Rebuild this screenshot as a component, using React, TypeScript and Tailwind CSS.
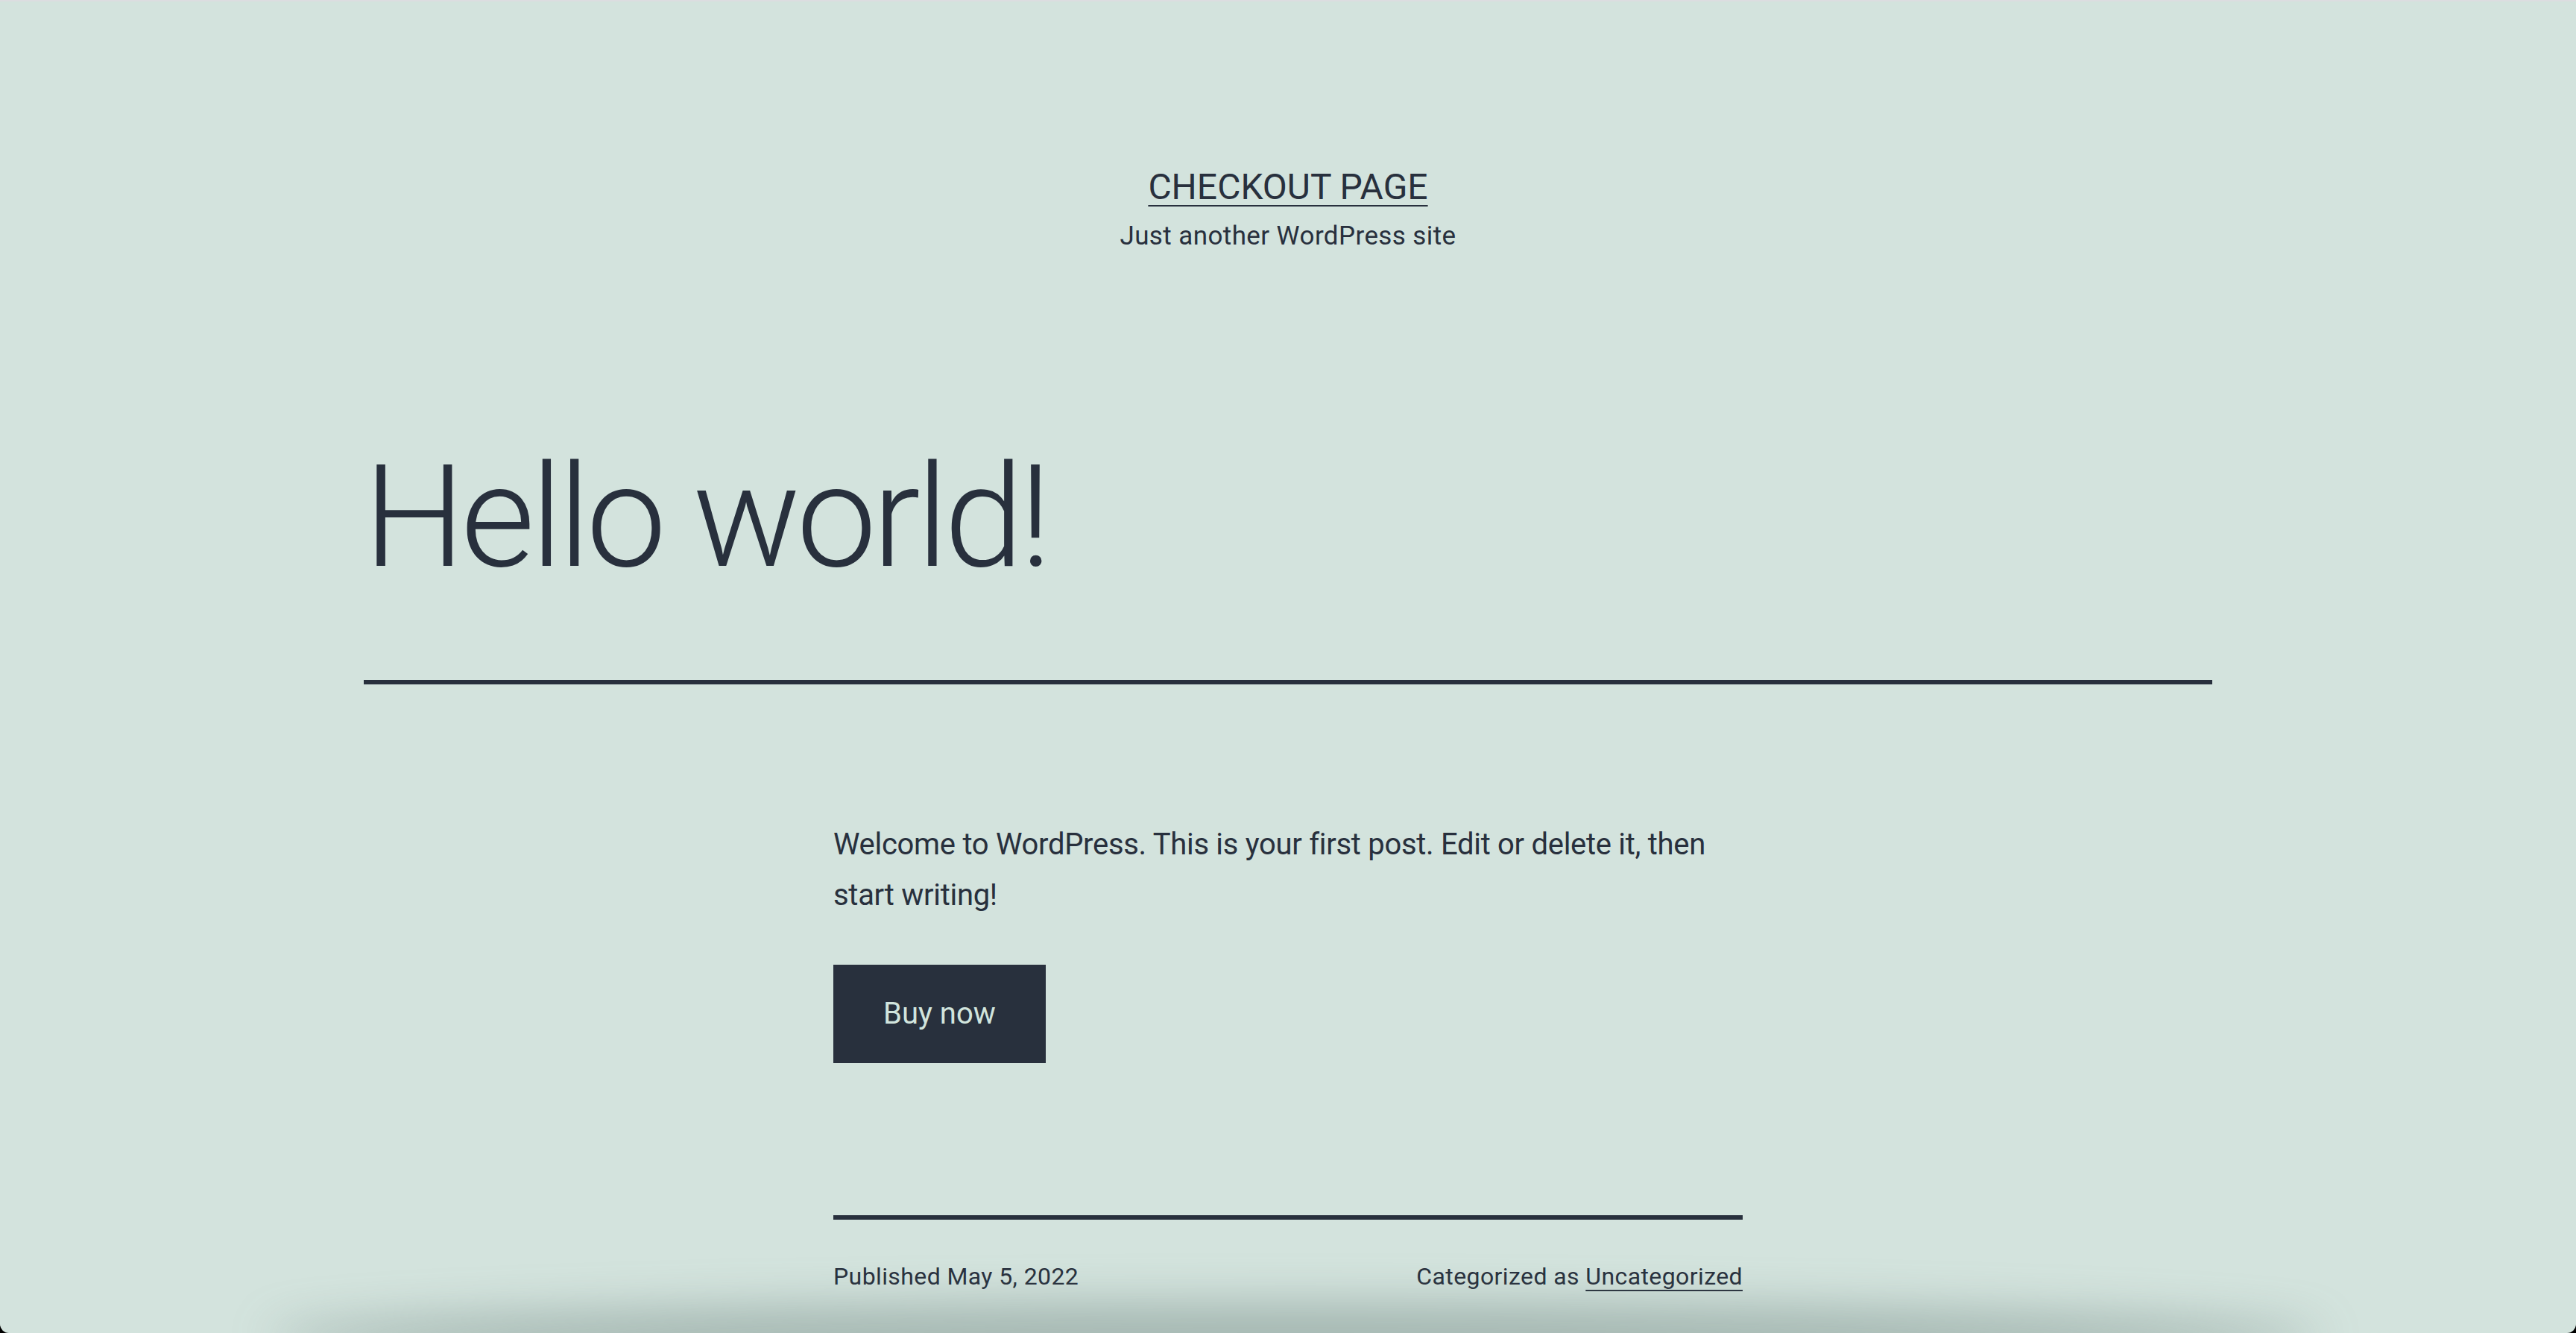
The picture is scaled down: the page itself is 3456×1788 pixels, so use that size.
const ink = 'text-[#28303d]'

function SiteHeader() {
  return (
    <header className="flex flex-col items-center pt-[218px]">
      <a href="#" className={`${ink} text-[48px] leading-[62px] uppercase underline decoration-2 underline-offset-[8px]`}>
        Checkout Page
      </a>
      <p className={`${ink} mt-[11px] text-[35px] leading-[48px] tracking-[0.4px]`}>Just another WordPress site</p>
    </header>
  )
}

function PostMeta() {
  return (
    <footer className={`${ink} mt-[54px] flex items-start justify-between text-[32px] leading-[45px] tracking-[0.4px]`}>
      <span>Published May 5, 2022</span>
      <span>
        Categorized as{' '}
        <a href="#" className="underline decoration-2 underline-offset-[7px]">
          Uncategorized
        </a>
      </span>
    </footer>
  )
}

export default function App() {
  return (
    <div className="h-[1788px] w-full bg-black">
      <div
        className="relative h-[1788px] w-full overflow-hidden rounded-b-[12px] border-t-2 border-[#dcdde0] bg-[#d3e3dd]"
        style={{ fontFamily: 'Roboto, "Liberation Sans", sans-serif' }}
      >
        <SiteHeader />

        <main>
          <div className="mx-auto w-[2480px]">
            <h1 className={`${ink} mt-[247px] text-[192px] leading-[211px] font-light tracking-[-0.03em]`}>Hello world!</h1>
            <div className="mt-[113px] h-[6px] bg-[#28303d]" />
          </div>

          <article className="mx-auto w-[1220px]">
            <p className={`${ink} mt-[181px] text-[40px] leading-[68px] tracking-[-0.3px]`}>
              Welcome to WordPress. This is your first post. Edit or delete it, then start writing!
            </p>
            <button className="mt-[59px] flex h-[132px] items-center bg-[#28303d] px-[67px] text-[40px] leading-[60px] text-[#d1e4dd]">
              Buy now
            </button>
            <div className="mt-[204px] h-[6px] bg-[#28303d]" />
            <PostMeta />
          </article>
        </main>

        {/* soft shadow from whatever sits below the window */}
        <div className="pointer-events-none absolute bottom-[-50px] left-[360px] right-[340px] h-[90px] rounded-[50%] bg-[#5f7570]/40 blur-[30px]" />
      </div>
    </div>
  )
}
